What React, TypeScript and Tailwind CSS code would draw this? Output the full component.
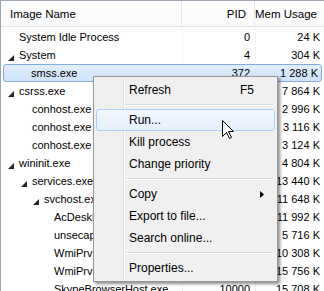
import React from "react";

type Row = {
  name: string;
  level: number;
  expanded?: boolean;
  pid: string;
  mem: string;
  selected?: boolean;
};

const rows: Row[] = [
  { name: "System Idle Process", level: 0, pid: "0", mem: "24 K" },
  { name: "System", level: 0, expanded: true, pid: "4", mem: "304 K" },
  { name: "smss.exe", level: 1, pid: "372", mem: "1 288 K", selected: true },
  { name: "csrss.exe", level: 0, expanded: true, pid: "484", mem: "7 864 K" },
  { name: "conhost.exe", level: 1, pid: "2212", mem: "2 996 K" },
  { name: "conhost.exe", level: 1, pid: "3340", mem: "3 116 K" },
  { name: "conhost.exe", level: 1, pid: "4716", mem: "3 124 K" },
  { name: "wininit.exe", level: 0, expanded: true, pid: "540", mem: "4 804 K" },
  { name: "services.exe", level: 1, expanded: true, pid: "636", mem: "13 440 K" },
  { name: "svchost.exe", level: 2, expanded: true, pid: "812", mem: "11 648 K" },
  { name: "AcDeskBandHlpr.exe", level: 3, pid: "3568", mem: "11 992 K" },
  { name: "unsecapp.exe", level: 3, pid: "4100", mem: "5 716 K" },
  { name: "WmiPrvSE.exe", level: 3, pid: "5024", mem: "10 308 K" },
  { name: "WmiPrvSE.exe", level: 3, pid: "6680", mem: "15 756 K" },
  { name: "SkypeBrowserHost.exe", level: 3, pid: "10000", mem: "15 708 K" },
];

const indent = ["pl-[17px]", "pl-[30px]", "pl-[42px]", "pl-[52px]"];

type MenuEntry =
  | { sep: true }
  | { label: string; shortcut?: string; submenu?: boolean; hot?: boolean };

const menu: MenuEntry[] = [
  { label: "Refresh", shortcut: "F5" },
  { sep: true },
  { label: "Run...", hot: true },
  { label: "Kill process" },
  { label: "Change priority" },
  { sep: true },
  { label: "Copy", submenu: true },
  { label: "Export to file..." },
  { label: "Search online..." },
  { sep: true },
  { label: "Properties..." },
];

function Expander() {
  return (
    <svg width="6" height="6" viewBox="0 0 6 6" className="absolute -left-[11px] top-[6px]">
      <path d="M6 0 L6 6 L0 6 Z" fill="#262626" />
    </svg>
  );
}

function ContextMenu() {
  return (
    <div className="absolute left-[93px] top-[76px] w-[185px] border border-[#979797] bg-[#f0f0f0] p-[2px] shadow-[2px_2px_3px_rgba(0,0,0,0.45)] font-['Liberation_Sans',sans-serif] text-[12px] text-black">
      <div className="absolute left-[29px] top-[2px] bottom-[2px] w-[2px] border-l border-[#e2e3e3] bg-white" />
      {menu.map((m, i) =>
        "sep" in m ? (
          <div key={i} className="relative h-[8px] pl-[29px] pr-[2px] flex flex-col justify-center">
            <div className="h-px bg-[#e0e0e0]" />
            <div className="h-px bg-white" />
          </div>
        ) : (
          <div
            key={i}
            className={`relative h-[22px] flex items-center pl-[32px] pr-[20px] rounded-[3px] border ${
              m.hot
                ? "border-[#aecff7] bg-gradient-to-b from-[#f2f7fe] to-[#e6effc]"
                : "border-transparent"
            }`}
          >
            <span className="flex-1">{m.label}</span>
            {m.shortcut && <span>{m.shortcut}</span>}
            {m.submenu && (
              <svg width="4" height="7" viewBox="0 0 4 7" className="absolute right-[10px] top-[7px]">
                <path d="M0 0 L4 3.5 L0 7 Z" fill="#000" />
              </svg>
            )}
          </div>
        )
      )}
    </div>
  );
}

function Cursor() {
  return (
    <svg width="13" height="20" viewBox="0 0 13 20" className="absolute left-[222px] top-[120px]">
      <path
        d="M0.5 0.5 L0.5 16.5 L4.5 12.5 L7.5 18.5 L9.5 17.5 L6.5 11.5 L11.5 11.5 Z"
        fill="#fff"
        stroke="#000"
        strokeWidth="1"
        strokeLinejoin="miter"
      />
    </svg>
  );
}

export default function App() {
  return (
    <div className="relative w-[324px] h-[291px] overflow-hidden bg-white font-['Liberation_Sans',sans-serif] text-black">
      <div className="h-full border-l border-t border-[#9da5b0]">
        <div className="grid grid-cols-[181px_73px_69px] h-[26px] border-b border-[#e5e5e5] bg-gradient-to-b from-white to-[#f9fafb] text-[11.5px] whitespace-nowrap">
          <div className="flex items-center pt-[2px] pl-[9px] border-r border-[#e3e8ef]">Image Name</div>
          <div className="flex items-center pt-[2px] justify-end pr-[8px] border-r border-[#e3e8ef]">PID</div>
          <div className="flex items-center pt-[2px] justify-end pr-[7px]">Mem Usage</div>
        </div>
        <div className="pt-[1px] text-[11px] whitespace-nowrap">
          {rows.map((r, i) => (
            <div
              key={i}
              className={`grid h-[18px] leading-[16px] border ${
                r.selected
                  ? "grid-cols-[179px_73px_67px] mx-[2px] rounded-[3px] border-[#84acdd] bg-gradient-to-b from-[#e1eefd] to-[#cfe3fc]"
                  : "grid-cols-[181px_73px_69px] border-transparent"
              }`}
            >
              <div
                className={`relative overflow-hidden border-r border-dotted ${
                  r.selected ? "pl-[27px] border-transparent" : `${indent[r.level]} border-[#e8e8e8]`
                }`}
              >
                <span className="relative">
                  {r.expanded && <Expander />}
                  {r.name}
                </span>
              </div>
              <div
                className={`text-right pr-[5px] border-r border-dotted ${
                  r.selected ? "border-transparent" : "border-[#e8e8e8]"
                }`}
              >
                {r.pid}
              </div>
              <div className="text-right pr-[5px]">{r.mem}</div>
            </div>
          ))}
        </div>
      </div>
      <ContextMenu />
      <Cursor />
    </div>
  );
}
